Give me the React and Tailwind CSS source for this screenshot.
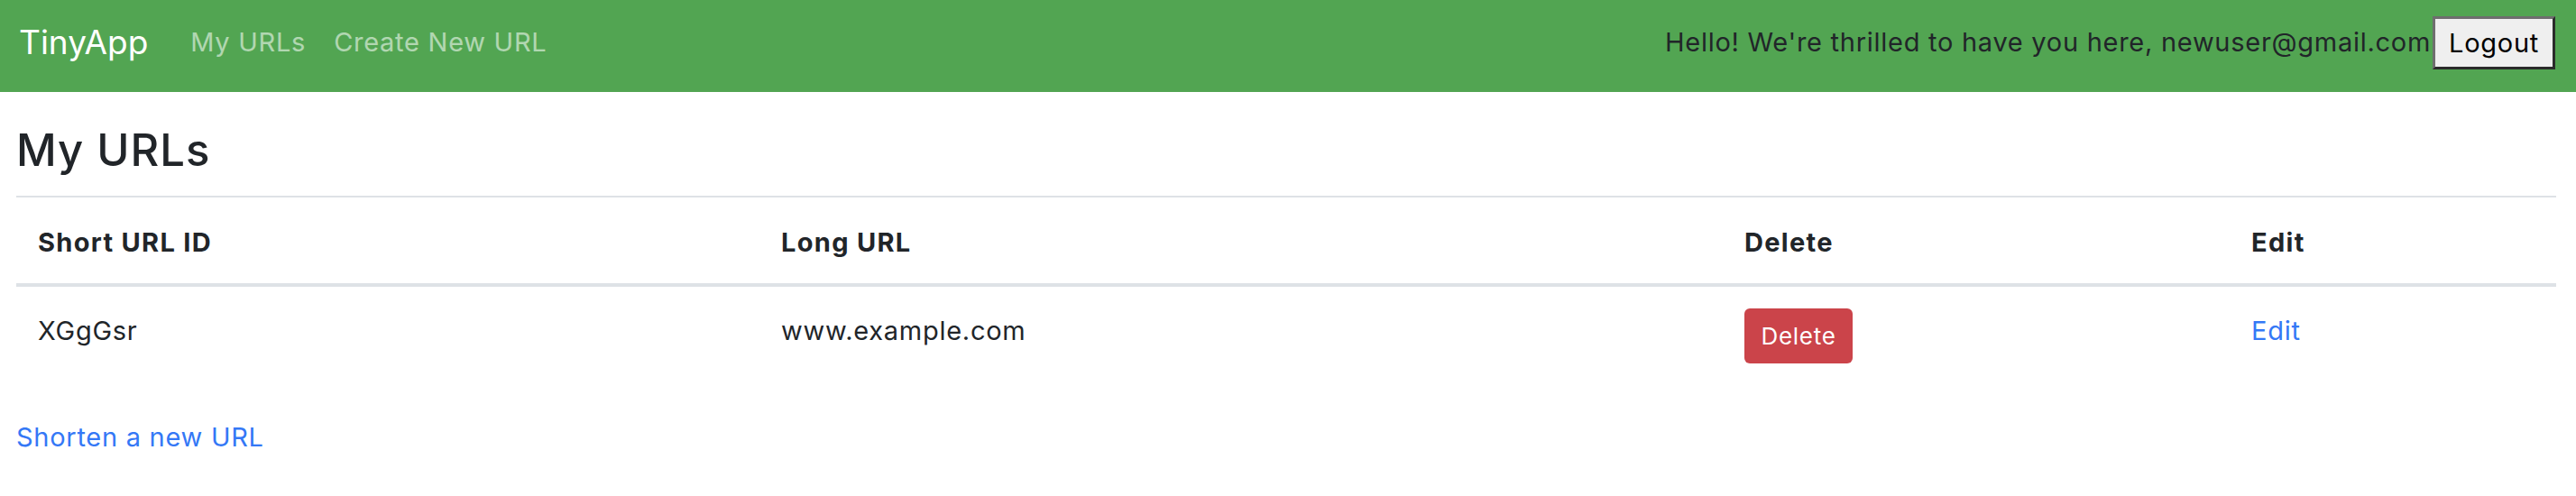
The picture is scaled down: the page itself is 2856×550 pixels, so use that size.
import React from 'react';

const urls = [{ id: 'XGgGsr', longURL: 'www.example.com' }];

export default function App() {
  return (
    <div className="min-h-screen bg-white font-['Inter',sans-serif] text-[29px] leading-[1.5] tracking-[0.025em] text-[#212529]">
      <nav className="flex h-[102px] items-center justify-between bg-[#52a552] pb-2 pl-[21px] pr-[23px]">
        <div className="flex items-center">
          <a href="#" className="text-[37px] tracking-normal text-white">
            TinyApp
          </a>
          <div className="ml-[47px] flex items-center gap-[31px] text-white/55">
            <a href="#">My URLs</a>
            <a href="#">Create New URL</a>
          </div>
        </div>
        <div className="flex items-center">
          <span>Hello! We're thrilled to have you here, newuser@gmail.com</span>
          <button className="ml-[2px] h-[59px] border-[3px] border-b-[#2b2b2b] border-l-[#6e6e6e] border-r-[#2b2b2b] border-t-[#6e6e6e] bg-[#efefef] px-[15px] leading-none text-black">
            Logout
          </button>
        </div>
      </nav>

      <main className="pl-[18px] pr-[22px] pt-[36px]">
        <h1 className="mb-[20px] text-[49px] font-medium leading-[1.2] tracking-[0.02em]">My URLs</h1>

        <table className="mb-[36px] w-full border-separate border-spacing-0 border-t-2 border-[#dee2e6] text-left">
          <thead className="tracking-[0.045em]">
            <tr>
              <th className="w-[824px] border-b-4 border-[#dee2e6] px-[24px] pb-[24px] pt-[28px] font-bold">Short URL ID</th>
              <th className="w-[1068px] border-b-4 border-[#dee2e6] px-[24px] pb-[24px] pt-[28px] font-bold">Long URL</th>
              <th className="w-[562px] border-b-4 border-[#dee2e6] px-[24px] pb-[24px] pt-[28px] font-bold">Delete</th>
              <th className="border-b-4 border-[#dee2e6] px-[24px] pb-[24px] pt-[28px] font-bold">Edit</th>
            </tr>
          </thead>
          <tbody>
            {urls.map((u) => (
              <tr key={u.id} className="align-top">
                <td className="px-[24px] pb-[24px] pt-[27px]">{u.id}</td>
                <td className="px-[24px] pb-[24px] pt-[27px]">{u.longURL}</td>
                <td className="px-[24px] pb-[24px] pt-[24px]">
                  <button className="flex h-[61px] w-[120px] items-center justify-center rounded-[6px] bg-[#cb444a] text-[26px] text-white">
                    Delete
                  </button>
                </td>
                <td className="px-[24px] pb-[24px] pt-[27px]">
                  <a href="#" className="text-[#3478f6]">
                    Edit
                  </a>
                </td>
              </tr>
            ))}
          </tbody>
        </table>

        <a href="#" className="text-[#3478f6]">
          Shorten a new URL
        </a>
      </main>
    </div>
  );
}
